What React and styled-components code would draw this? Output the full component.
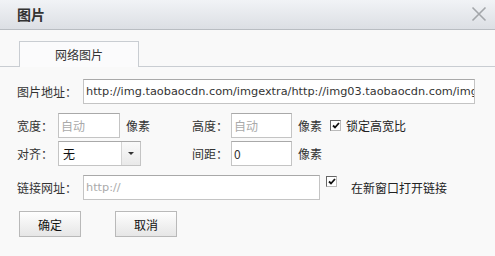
import React from "react";
import styled, { createGlobalStyle } from "styled-components";

const Global = createGlobalStyle`
  html, body { margin: 0; padding: 0; }
  body {
    width: 495px;
    height: 256px;
    overflow: hidden;
    background: #f9f9f9;
    font-family: "Noto Sans CJK SC", "DejaVu Sans", sans-serif;
    font-size: 12px;
    color: #333;
  }
`;

const Dialog = styled.div`
  width: 495px;
  height: 256px;
  background: #f9f9f9;
  display: flex;
  flex-direction: column;
`;

const Header = styled.div`
  height: 29px;
  border-bottom: 1px solid #b9bdc2;
  background: linear-gradient(#f1f3f6, #dcdfe4);
  display: flex;
  align-items: center;
  justify-content: space-between;
  padding: 0 8px 0 17px;
`;

const Title = styled.div`
  font-size: 14px;
  font-weight: bold;
  color: #333;
  line-height: 14px;
  margin-top: -1px;
`;

const Close = styled.button`
  width: 16px;
  height: 16px;
  padding: 0;
  border: none;
  background: none;
  display: flex;
  margin-top: -1px;
`;

const TabBar = styled.div`
  margin-top: 11px;
  padding-left: 19px;
  border-bottom: 1px solid #c9cdd2;
  display: flex;
  height: 25px;
`;

const Tab = styled.div`
  width: 120px;
  height: 25px;
  border: 1px solid #c9cdd2;
  border-bottom: none;
  background: #fbfbfc;
  display: flex;
  align-items: center;
  justify-content: center;
  color: #333;
  margin-bottom: -1px;
  padding-bottom: 1px;
  box-sizing: border-box;
  height: 26px;
`;

const Form = styled.div`
  padding: 12px 0 0 17px;
  display: flex;
  flex-direction: column;
`;

const Row = styled.div`
  display: flex;
  align-items: ${(p) => p.$align || "center"};
  height: 25px;
  margin-top: ${(p) => p.$mt || 0}px;
`;

const Label = styled.span`
  width: ${(p) => p.$w}px;
  flex: none;
  color: #333;
  white-space: nowrap;
`;

const Input = styled.div`
  width: ${(p) => p.$w}px;
  height: 25px;
  box-sizing: border-box;
  flex: none;
  background: #fff;
  border: 1px solid #c4c4c4;
  border-top-color: #a9a9a9;
  display: flex;
  align-items: center;
  padding-left: 2px;
  overflow: hidden;
  white-space: nowrap;
  font-family: ${(p) => (p.$latin ? '"DejaVu Sans", sans-serif' : '"Noto Sans CJK SC", sans-serif')};
  font-size: ${(p) => (p.$latin ? "11.3px" : "12px")};
  color: ${(p) => (p.$placeholder ? "#aaa" : "#333")};
`;

const Unit = styled.span`
  width: ${(p) => p.$w}px;
  flex: none;
  padding-left: 6px;
  box-sizing: border-box;
  color: #333;
`;

const Select = styled.div`
  width: 83px;
  height: 25px;
  box-sizing: border-box;
  flex: none;
  background: #fff;
  border: 1px solid #c4c4c4;
  border-top-color: #a9a9a9;
  display: flex;
  margin-right: 51px;
`;

const SelectValue = styled.span`
  flex: 1;
  display: flex;
  align-items: center;
  padding-left: 4px;
  color: #111;
`;

const SelectButton = styled.span`
  width: 18px;
  border-left: 1px solid #d4d4d4;
  background: linear-gradient(#fafafa, #e9e9e9);
  display: flex;
  align-items: center;
  justify-content: center;
`;

const Arrow = styled.span`
  width: 0;
  height: 0;
  border-left: 3px solid transparent;
  border-right: 3px solid transparent;
  border-top: 3px solid #333;
`;

const Check = styled.span`
  width: 11px;
  height: 11px;
  box-sizing: border-box;
  flex: none;
  border: 1px solid #666;
  border-right-color: #bbb;
  border-bottom-color: #bbb;
  background: #fff;
  display: flex;
  align-items: center;
  justify-content: center;
  margin-top: ${(p) => p.$mt || 0}px;
`;

const CheckText = styled.span`
  margin-left: ${(p) => p.$ml}px;
  color: #222;
  white-space: nowrap;
`;

const Buttons = styled.div`
  display: flex;
  gap: 34px;
  margin-top: 11px;
  padding-left: 2px;
`;

const Button = styled.button`
  width: 62px;
  height: 26px;
  box-sizing: border-box;
  border: 1px solid #b9b9b9;
  background: linear-gradient(#fefefe, #e6e6e6);
  font-family: "Noto Sans CJK SC", sans-serif;
  font-size: 12px;
  color: #111;
  padding: 0;
`;

const CheckMark = () => (
  <svg width="8" height="7" viewBox="0 0 8 7">
    <path d="M1 3.5 L3 5.5 L7 1" stroke="#111" strokeWidth="1.8" fill="none" />
  </svg>
);

export default function App() {
  return (
    <>
      <Global />
      <Dialog>
        <Header>
          <Title>图片</Title>
          <Close aria-label="关闭">
            <svg width="16" height="16" viewBox="0 0 16 16">
              <path d="M1.5 1.5 L14.5 14.5 M14.5 1.5 L1.5 14.5" stroke="#a3a6aa" strokeWidth="1.6" />
            </svg>
          </Close>
        </Header>
        <TabBar>
          <Tab>网络图片</Tab>
        </TabBar>
        <Form>
          <Row>
            <Label $w={66}>图片地址：</Label>
            <Input $w={392} $latin>
              http://img.taobaocdn.com/imgextra/http://img03.taobaocdn.com/imgextra/i3/T1.jpg
            </Input>
          </Row>
          <Row $mt={9}>
            <Label $w={41}>宽度：</Label>
            <Input $w={62} $placeholder>自动</Input>
            <Unit $w={72}>像素</Unit>
            <Label $w={39}>高度：</Label>
            <Input $w={61} $placeholder>自动</Input>
            <Unit $w={38}>像素</Unit>
            <Check>
              <CheckMark />
            </Check>
            <CheckText $ml={5}>锁定高宽比</CheckText>
          </Row>
          <Row $mt={3}>
            <Label $w={41}>对齐：</Label>
            <Select>
              <SelectValue>无</SelectValue>
              <SelectButton>
                <Arrow />
              </SelectButton>
            </Select>
            <Label $w={39}>间距：</Label>
            <Input $w={61}>0</Input>
            <Unit $w={40}>像素</Unit>
          </Row>
          <Row $mt={9}>
            <Label $w={66}>链接网址：</Label>
            <Input $w={237} $latin $placeholder>http://</Input>
            <Check $mt={-12} style={{ marginLeft: 6 }}>
              <CheckMark />
            </Check>
            <CheckText $ml={14}>在新窗口打开链接</CheckText>
          </Row>
          <Buttons>
            <Button>确定</Button>
            <Button>取消</Button>
          </Buttons>
        </Form>
      </Dialog>
    </>
  );
}
